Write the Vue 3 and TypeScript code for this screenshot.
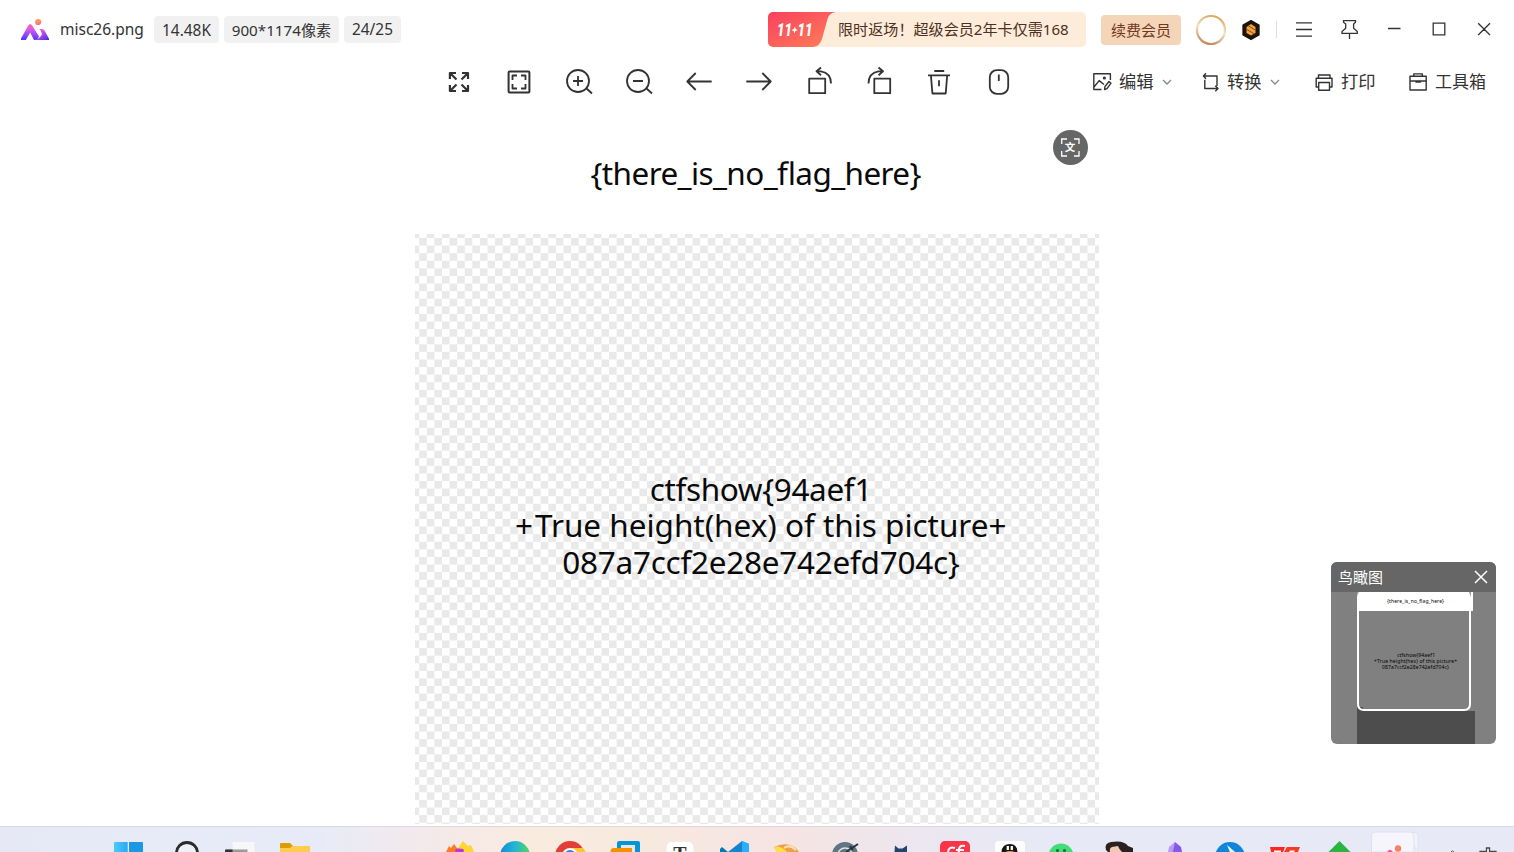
<script setup lang="ts">
interface FileInfo {
  name: string
  size: string
  dimensions: string
  position: string
}

const file: FileInfo = {
  name: 'misc26.png',
  size: '14.48K',
  dimensions: '900*1174像素',
  position: '24/25',
}

interface PictureLine {
  text: string
  x: number
  y: number
  width: number
  dx?: string
}

const pictureLines: PictureLine[] = [
  { text: '{there_is_no_flag_here}', x: 175.5, y: 75.3, width: 331 },
  { text: 'ctfshow{94aef1', x: 234.8, y: 390.6, width: 222.5 },
  { text: '+True height(hex) of this picture+', x: 100, y: 427, width: 491.5, dx: '0 2' },
  { text: '087a7ccf2e28e742efd704c}', x: 147.3, y: 463.5, width: 397.5 },
]

const thumbLines: PictureLine[] = [
  { text: '{there_is_no_flag_here}', x: 56, y: 41, width: 57 },
  { text: 'ctfshow{94aef1', x: 66, y: 95, width: 38 },
  { text: '+True height(hex) of this picture+', x: 43, y: 101, width: 83 },
  { text: '087a7ccf2e28e742efd704c}', x: 51, y: 107, width: 67 },
]
</script>

<template>
  <div class="viewer">
    <header class="titlebar">
      <svg class="logo" width="30" height="22" viewBox="20 19 30 22">
        <defs>
          <linearGradient id="lg" x1="0" y1="0" x2="0" y2="1">
            <stop offset="0" stop-color="#ff6a9c" /><stop offset=".4" stop-color="#d055f4" /><stop offset="1" stop-color="#4a35ff" />
          </linearGradient>
          <linearGradient id="lg2" x1="0" y1="0" x2="1" y2="1">
            <stop offset="0" stop-color="#ff6d8c" /><stop offset=".45" stop-color="#c04ff0" /><stop offset="1" stop-color="#4029d8" />
          </linearGradient>
          <linearGradient id="lg3" x1="0" y1="0" x2="0" y2="1">
            <stop offset="0" stop-color="#ffab43" /><stop offset="1" stop-color="#f9679b" />
          </linearGradient>
        </defs>
        <path d="M21 38.6 28.2 25.5Q30.2 22.4 32.2 25.5L39 36.5 36.8 40H34L30.2 32.5 25.8 40H21Z" fill="url(#lg)" />
        <path d="M39.3 29.3Q43 28 44.8 31L49 38.7V40H34.5Q39.8 38.5 42 34.5Q42 31 39.3 29.3Z" fill="url(#lg2)" />
        <circle cx="38.2" cy="22" r="3.1" fill="url(#lg3)" />
      </svg>
      <span class="filename">{{ file.name }}</span>
      <span class="chip chip-size">{{ file.size }}</span>
      <span class="chip chip-dim">{{ file.dimensions }}</span>
      <span class="chip chip-pos">{{ file.position }}</span>

      <div class="promo">
        <svg class="promo-tag" width="69" height="35" viewBox="0 0 69 35">
          <defs>
            <linearGradient id="pg" x1="0" y1="0" x2="1" y2="1">
              <stop offset="0" stop-color="#f9405f" /><stop offset="1" stop-color="#ff8057" />
            </linearGradient>
          </defs>
          <path d="M0 0H68Q61 1 59.5 7L54 27Q52 34 45 35H0Z" fill="url(#pg)" />
          <g class="tag-text">
            <text x="9" y="24" textLength="15" lengthAdjust="spacingAndGlyphs">11</text>
            <text x="29.5" y="24" textLength="15" lengthAdjust="spacingAndGlyphs">11</text>
          </g>
          <path d="M26.8 14.5 27.8 17 30 18 27.5 19 26.3 21.5 25.5 19 23.5 18 25.9 17Z" fill="#fff" />
        </svg>
        <span class="promo-text">限时返场！超级会员2年卡仅需168</span>
      </div>
      <button class="renew">续费会员</button>
      <svg class="controls" width="318" height="36" viewBox="1190 12 318 36" fill="none" stroke="#333" stroke-width="1.3">
        <defs>
          <linearGradient id="ring" x1=".7" y1="0" x2=".4" y2="1">
            <stop offset="0" stop-color="#d8ab55" /><stop offset=".5" stop-color="#f5dfc8" /><stop offset="1" stop-color="#c68a5b" />
          </linearGradient>
        </defs>
        <circle cx="1211" cy="30" r="14" stroke="url(#ring)" stroke-width="2.2" />
        <path d="M1251 20.5 1259 25V35L1251 39.5 1243 35V25Z" fill="#1c1409" stroke="#1c1409" stroke-linejoin="round" />
        <path d="M1246.5 27 1251 24 1255.5 27V33L1251 35.5 1246.5 33Z" fill="#f2a13d" stroke="none" />
        <path d="M1246 29 1254.5 34M1248 25.5 1256 30.5" stroke="#794512" stroke-width=".9" />
        <path d="M1276.5 21V38" stroke="#ddd" stroke-width="1" />
        <path d="M1296 22.9H1312M1296 29.5H1312M1296 36.1H1312" />
        <path d="M1343.5 20.6H1355.5V22.3L1353.6 24V28.3L1357.3 31.5V33.3H1342V31.5L1345.7 28.3V24L1343.5 22.3ZM1349.5 33.3V39" />
        <path d="M1388 28.5H1400.5M1433.2 23.2H1444.8V34.8H1433.2ZM1478.2 23.2 1490 35M1490 23.2 1478.2 35" />
      </svg>
    </header>

    <nav class="toolbar">
      <div class="tools">
        <svg viewBox="429 52 60 60" class="tool">
          <path d="M449.9 79V73H456M451 74 456.5 79.5M462 73H468V79M467 74 461.5 79.5M449.9 85V91H456M451 90 456.5 84.5M462 91H468V85M467 90 461.5 84.5" stroke-width="2.2" />
        </svg>
        <svg viewBox="489 52 60 60" class="tool">
          <rect x="508.6" y="71.6" width="20.8" height="20.8" rx="1" stroke-width="2" /><path d="M512.5 80V75.5H517M521 75.5H525.5V80M525.5 84V88.5H521M517 88.5H512.5V84" />
        </svg>
        <svg viewBox="549 52 60 60" class="tool">
          <circle cx="578" cy="81" r="11" /><path d="M573 81H583M578 76V86M586 88 592 93.5" />
        </svg>
        <svg viewBox="609 52 60 60" class="tool">
          <circle cx="638" cy="81" r="11" /><path d="M633 81H643M646 88 652 93.5" />
        </svg>
        <svg viewBox="669 52 60 60" class="tool"><path d="M711.7 81.5H687.5M695.7 73 687.3 81.5 695.7 90" /></svg>
        <svg viewBox="729 52 60 60" class="tool"><path d="M746.3 81.5H770.5M762.3 73 770.7 81.5 762.3 90" /></svg>
        <svg viewBox="789 52 60 60" class="tool"><path d="M809.2 78.7H825.2V93.2H809.2ZM831 83.5Q831 73 821 71.3H817M821 67.5 816.5 71.3 821 75.2" /></svg>
        <svg viewBox="849 52 60 60" class="tool"><path d="M874.3 78.7H890.2V93.2H874.3ZM868.5 83.5Q868.5 73 878.5 71.3H882.5M878.5 67.5 883 71.3 878.5 75.2" /></svg>
        <svg viewBox="909 52 60 60" class="tool"><path d="M934.3 71H944.2M928 75.3H950M930.9 75.3 932.4 93.5H945.7L947.2 75.3M939 80.3V86.3" /></svg>
        <svg viewBox="969 52 60 60" class="tool"><rect x="989.8" y="70.2" width="18.4" height="23.6" rx="7" /><path d="M998.8 74.5V81" /></svg>
      </div>
      <div class="menus">
        <div class="menu edit">
          <svg class="menu-icon" viewBox="1092 72 20 20"><path d="M1101.5 89.5H1093.8V73.7H1110.4V80M1094 87 1099.2 80.6 1104 84.5M1104.5 89.5 1105 86.5 1109 81.5 1111 83.2 1107 88.6Z" /><circle cx="1104.4" cy="78" r=".9" /></svg>
          <span>编辑</span>
          <svg class="chevron" viewBox="0 0 12 12"><path d="M2 4 6 8 10 4" /></svg>
        </div>
        <div class="menu convert">
          <svg class="menu-icon" viewBox="1201 72 20 20"><path d="M1206 73.3 1203.4 76 1206 78.7M1203.5 76H1217V86M1204.8 79.8V88.5H1218M1215.3 85.8 1218 88.5 1215.3 91.2" /></svg>
          <span>转换</span>
          <svg class="chevron" viewBox="0 0 12 12"><path d="M2 4 6 8 10 4" /></svg>
        </div>
        <div class="menu print">
          <svg class="menu-icon" viewBox="1314 72 20 20"><path d="M1318.5 78V75H1330V78M1318.5 87H1316.2V78.3H1332V87H1329.7M1318.7 82.5H1329.5V90.3H1318.7Z" /></svg>
          <span>打印</span>
        </div>
        <div class="menu toolbox">
          <svg class="menu-icon" viewBox="1408 72 20 20"><path d="M1410 76.3H1426.2V90H1410ZM1410 81H1426.2M1413.8 76V73.9H1422.3V76M1416 81V82H1420.5V81" /></svg>
          <span>工具箱</span>
        </div>
      </div>
    </nav>

    <main class="stage">
      <div class="picture">
        <div class="checker"></div>
        <svg class="picture-text" width="684" height="713" viewBox="0 0 684 713">
          <text v-for="line in pictureLines" :key="line.text" :x="line.x" :y="line.y" :dx="line.dx" :textLength="line.width">{{ line.text }}</text>
        </svg>
        <svg class="ocr" width="35" height="35" viewBox="0 0 35 35">
          <circle cx="17.5" cy="17.5" r="17.5" fill="#666" />
          <path d="M8.7 14V9H14M21 9H26V14M26 21V26H21M14 26H8.7V21" fill="none" stroke="#fff" stroke-width="1.3" />
          <text x="11.8" y="21.2">文</text>
        </svg>
      </div>

      <svg class="birdseye" width="165" height="182" viewBox="0 0 165 182">
        <defs><clipPath id="panel"><rect width="165" height="182" rx="6" /></clipPath></defs>
        <g clip-path="url(#panel)">
          <rect width="165" height="182" fill="#808080" />
          <path d="M26 145H32V149H144V182H26Z" fill="#4d4d4d" />
          <path d="M26 30H142V49H26Z" fill="#fff" />
          <path d="M26 30H28Q26 32 26 35ZM138 30H140V35Z" fill="#999" />
          <path d="M27 48V142Q27 148 33 148H133Q139 148 139 142V48" fill="none" stroke="#fff" stroke-width="2" />
          <rect width="165" height="30" fill="#666" />
        </g>
        <text class="panel-title" x="7" y="20.5" textLength="45">鸟瞰图</text>
        <path d="M144 9 156 21M156 9 144 21" stroke="#fff" stroke-width="1.5" />
        <text v-for="line in thumbLines" :key="line.text" class="thumb-text" :x="line.x" :y="line.y" :textLength="line.width">{{ line.text }}</text>
      </svg>
    </main>

    <footer class="taskbar">
      <svg viewBox="102 826 55 26"><defs><linearGradient id="w1"><stop offset="0" stop-color="#4dcaff" /><stop offset="1" stop-color="#29aaf0" /></linearGradient></defs><path d="M114 852V843Q114 842 115 842H127.7V852Z" fill="url(#w1)" /><path d="M129 842H142Q143 842 143 843V852H129Z" fill="#1c97e3" /></svg>
      <svg viewBox="157 826 55 26"><circle cx="187" cy="853" r="10.5" fill="#eef1f8" stroke="#2b2b2b" stroke-width="2.8" /></svg>
      <svg viewBox="212 826 55 26"><path d="M232.5 842H254.5V852H232.5Z" fill="#f7f7f7" /><path d="M225 852V850.5Q225 849.5 226 849.5H247.5V852Z" fill="#999" /><path d="M225 852V850.5Q225 849.5 226 849.5H232.5V852Z" fill="#333" /></svg>
      <svg viewBox="267 826 55 26"><path d="M280 852V844Q280 843 281 843H290L293 846H310V852Z" fill="#dd9c00" /><path d="M280 848H290L292.5 846H310V852H280Z" fill="#ffcd4d" /></svg>
      <span class="gap"></span>
      <svg viewBox="432 826 55 26"><path d="M446 852 449 846 451 848 454 844 457 848H463L472 852Z" fill="#ff7a22" /><path d="M458 848 463 841 468 846 471 845 474 852H456Z" fill="#ffd52f" /><ellipse cx="459.5" cy="850.5" rx="4.5" ry="2" fill="#b837df" /></svg>
      <svg viewBox="487 826 55 26"><defs><linearGradient id="edge"><stop offset="0" stop-color="#1389d5" /><stop offset=".5" stop-color="#23b6d5" /><stop offset="1" stop-color="#58d45c" /></linearGradient></defs><circle cx="515" cy="856" r="15" fill="url(#edge)" /></svg>
      <svg viewBox="542 826 55 26"><circle cx="570" cy="856" r="15" fill="#e04035" /><path d="M571 848H583L586 852H573Z" fill="#fec62d" /><circle cx="570" cy="856" r="8" fill="#fff" /><circle cx="570" cy="856" r="6" fill="#437bd5" /></svg>
      <svg viewBox="597 826 55 26"><path d="M617 852V843Q617 841 619 841H638Q640 841 640 843V852Z" fill="#0796d4" /><path d="M621 845H635V852H621Z" fill="#e5e7ea" /><path d="M610.5 852Q610.5 848 614 848H632V852Z" fill="#f59000" /></svg>
      <svg viewBox="652 826 55 26"><rect x="666.5" y="842" width="27" height="18" rx="5" fill="#fff" /><text class="type-letter" x="680" y="861" text-anchor="middle">T</text></svg>
      <svg viewBox="707 826 55 26"><path d="M720 849 722 847 728 852H720Z" fill="#0877b9" /><path d="M728 852 742 841 749 844V852Z" fill="#1684cd" /><path d="M742 841 749 844V852H742Z" fill="#2aafff" /></svg>
      <svg viewBox="762 826 55 26"><path d="M774 847Q786 841 796 848L799 852H777Z" fill="#eda04a" /><path d="M774 847Q779 845 785 850L787 852H777Z" fill="#ffe044" /><path d="M784 848Q790 844 796 850" stroke="#ffdfac" stroke-width="2" fill="none" /></svg>
      <svg viewBox="817 826 55 26"><circle cx="845" cy="855" r="13" fill="#607783" /><circle cx="845" cy="855" r="7" fill="none" stroke="#dce7e8" stroke-width="1.5" /><path d="M846 852 858 844M850 846 853 850" stroke="#29363d" stroke-width="2" /></svg>
      <svg viewBox="872 826 55 26"><path d="M894.5 852 895 845.5 898.5 848.5H902.5L907 845.5V852Z" fill="#234371" /></svg>
      <svg viewBox="927 826 55 26"><rect x="940" y="841" width="30" height="20" rx="5" fill="#fa3547" /><path d="M955 848Q948 846 948 853M965 846Q958 844 959 853M956 850H964" fill="none" stroke="#fff" stroke-width="2" /></svg>
      <svg viewBox="982 826 55 26"><rect x="995" y="841" width="30" height="20" rx="4" fill="#fff" /><path d="M1001.5 852Q1002 844 1010 844Q1017 844 1017.5 852Z" fill="#161616" /><path d="M1007.8 846V850M1011.8 846V850" stroke="#fff" stroke-width="2.3" /><path d="M1005 852Q1010 850 1015 852Z" fill="#f0a21a" /></svg>
      <svg viewBox="1037 826 55 26"><circle cx="1061" cy="856" r="12.5" fill="#42dc78" /><circle cx="1057.5" cy="850.5" r="1.5" fill="#126b35" /><circle cx="1064.5" cy="850.5" r="1.5" fill="#126b35" /></svg>
      <svg viewBox="1092 826 55 26"><path d="M1106 850Q1104 843 1111 842Q1124 840 1128 846L1133 848V852H1108Z" fill="#2d2020" /><path d="M1110 852Q1109 848 1112 847L1118 846Q1119 849 1122 852Z" fill="#efc9b3" /></svg>
      <svg viewBox="1147 826 55 26"><path d="M1168 852 1169 847 1175 842V852Z" fill="#b99af5" /><path d="M1175 842 1181 847 1182 852H1173Z" fill="#8458e8" /></svg>
      <svg viewBox="1202 826 55 26"><circle cx="1230" cy="857" r="15" fill="#1086da" /><path d="M1227 845 1235 852H1230Z" fill="#fff" /></svg>
      <svg viewBox="1257 826 55 26"><path d="M1270 847H1285L1283 852H1271Z" fill="#ff2523" /><path d="M1287 847H1300L1298 852H1284Z" fill="#f53b22" /><path d="M1274 850.5H1281V852H1274ZM1290 850.5H1295L1294 852H1289Z" fill="#fff" /></svg>
      <svg viewBox="1312 826 55 26"><path d="M1328.5 852 1339.5 841 1350.5 852Z" fill="#2bb344" /></svg>
      <svg viewBox="1367 826 55 26"><path d="M1409 832.5H1415Q1418 832.5 1418 836V852" fill="#f1f4fc" stroke="#dfe1f1" /><path d="M1371.5 852V836Q1371.5 832 1375.5 832H1410Q1414 832 1414 836V852Z" fill="#f5f5fb" stroke="#e0e0ef" /><circle cx="1398" cy="848.5" r="3.2" fill="#f98063" /><path d="M1387 852Q1390 847.5 1393 852Z" fill="#f85991" /></svg>
      <svg viewBox="1422 826 92 26"><path d="M1451 852 1452.5 850.8 1454 852" stroke="#555" fill="none" /><path d="M1480 852.5V851.3H1486.5V848H1489.5V851.3H1496V852.5" stroke="#444" stroke-width="1.3" fill="#fff" /></svg>
    </footer>
  </div>
</template>

<style>
html, body { margin: 0; overflow: hidden; background: #fff; }
</style>

<style scoped>
.viewer {
  width: 1514px;
  height: 852px;
  overflow: hidden;
  display: flex;
  flex-direction: column;
  background: #fff;
  color: #333;
  font-family: "Noto Sans", "Noto Sans CJK SC", sans-serif;
  font-size: 15px;
  white-space: nowrap;
}
svg { flex-shrink: 0; display: block; }
.titlebar { height: 59px; box-sizing: border-box; padding: 0 6px 0 20px; display: flex; align-items: center; flex-shrink: 0; }
.filename { width: 94px; margin-left: 10px; padding-bottom: 2px; font-size: 15.5px; flex-shrink: 0; }
.chip { height: 27px; line-height: 30px; border-radius: 4px; background: #f1f1f1; text-align: center; margin-right: 5px; flex-shrink: 0; font-size: 15.4px; }
.chip-size { width: 65px; }
.chip-dim { width: 115px; font-size: 15.2px; line-height: 28.6px; }
.chip-pos { width: 57px; line-height: 28px; }
.promo { width: 318px; height: 35px; margin-left: 362px; border-radius: 5px; overflow: hidden; background: #feecda; display: flex; align-items: center; flex-shrink: 0; }
.promo-text { margin-left: 1px; padding-bottom: 3px; font-size: 15.1px; color: #4c3022; }
.tag-text { fill: #fff; font: italic 900 18px Roboto, sans-serif; }
.renew { width: 80px; height: 30px; margin-left: 15px; padding: 0; border: 0; border-radius: 4px; background: #f5d5b8; color: #70391f; font: 15px "Noto Sans CJK SC", sans-serif; flex-shrink: 0; }
.controls { margin-left: 9px; }

.toolbar { height: 51px; display: flex; flex-shrink: 0; padding-left: 429px; }
.tools { display: flex; width: 663px; margin-top: -7px; flex-shrink: 0; }
.tool { width: 60px; height: 60px; fill: none; stroke: #333; stroke-width: 1.8; stroke-linejoin: round; }
.menus { display: flex; align-items: center; height: 46px; }
.menu { display: flex; align-items: center; font-size: 17.3px; flex-shrink: 0; }
.menu span { padding-bottom: 3px; }
.menu-icon { width: 20px; height: 20px; margin-right: 7px; fill: none; stroke: #333; stroke-width: 1.4; stroke-linejoin: round; }
.chevron { width: 12px; height: 12px; margin-left: 7px; fill: none; stroke: #888; stroke-width: 1.3; }
.edit { width: 109px; }
.convert { width: 113px; }
.convert .menu-icon { margin-right: 6px; }
.print { width: 94px; }
.toolbox { font-size: 17px; }

.stage { position: relative; height: 716px; flex-shrink: 0; padding-left: 415px; }
.picture { position: relative; width: 684px; height: 714px; padding-top: 124px; box-sizing: border-box; }
.checker {
  height: 590px;
  background: conic-gradient(#fff 25%, #e9e9e9 0 50%, #fff 0 75%, #e9e9e9 0) 4.2px 4px / 15.2px 15.2px;
}
.picture-text { position: absolute; left: 0; top: 0; font-size: 31.5px; fill: #0a0a0a; }
.ocr { position: absolute; left: 638px; top: 20px; }
.ocr text { fill: #fff; font: 700 10.5px "Noto Sans CJK SC", sans-serif; }
.birdseye { position: absolute; left: 1331px; top: 452px; }
.panel-title { fill: #fff; font-size: 15px; }
.thumb-text { font-size: 5px; fill: #000; }

.taskbar {
  height: 26px;
  padding-left: 102px;
  display: flex;
  flex-shrink: 0;
  background: linear-gradient(#c8c8d880 0 1px, transparent 1px), linear-gradient(90deg, #e6e8f5 0, #e7ebf8 310px, #f5e9e8 450px, #faebdf 530px, #f8e9df 640px, #f5e4e3 790px, #ebe7f1 940px, #e7e9f6 1040px, #e7eaf6 100%);
}
.taskbar svg { width: 55px; height: 26px; }
.taskbar svg:last-child { width: 92px; }
.gap { width: 110px; flex-shrink: 0; }
.type-letter { font: bold 20px "Liberation Serif", serif; fill: #333; }
</style>
